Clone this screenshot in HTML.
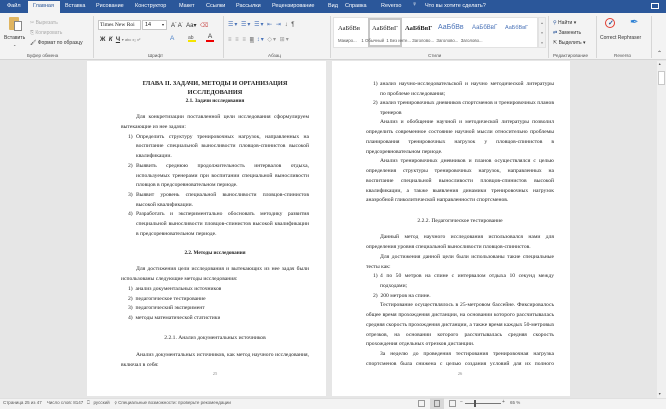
<!DOCTYPE html><html><head><meta charset="utf-8"><style>
*{margin:0;padding:0;box-sizing:border-box}
body{width:666px;height:409px;overflow:hidden;background:#e6e6e6;font-family:"Liberation Sans",sans-serif;position:relative}
.a{position:absolute;white-space:nowrap}
.tab{position:absolute;top:3px;font-size:5.5px;color:#fff}
.rb{font-size:5px;color:#333}
.g{font-size:4.6px;color:#555}
.sep{position:absolute;top:16px;width:1px;height:42px;background:#d6d6d6}
.pg{position:absolute;background:#fff}
.l{position:absolute;white-space:nowrap;font-family:"Liberation Serif",serif;font-size:5.6px;line-height:8px;color:#222;overflow:hidden}
.j{text-align:justify;text-align-last:justify}
.c{text-align:center}
.ic{position:absolute;background:#8a8a8a}
</style></head><body>
<!-- title/tab bar -->
<div class="a" style="left:0;top:0;width:666px;height:13px;background:#2b579a"></div>
<div class="a" style="left:28px;top:1px;width:32px;height:12px;background:#f3f3f3"></div>
<div class="tab" style="left:7px">Файл</div>
<div class="tab" style="left:33px;color:#2b579a">Главная</div>
<div class="tab" style="left:65px">Вставка</div>
<div class="tab" style="left:96px">Рисование</div>
<div class="tab" style="left:135px">Конструктор</div>
<div class="tab" style="left:179px">Макет</div>
<div class="tab" style="left:206px">Ссылки</div>
<div class="tab" style="left:236px">Рассылки</div>
<div class="tab" style="left:272px">Рецензирование</div>
<div class="tab" style="left:328px">Вид</div>
<div class="tab" style="left:345px">Справка</div>
<div class="tab" style="left:381px">Reverso</div>
<div class="tab" style="left:412px;top:1px;font-size:7px">♀</div>
<div class="tab" style="left:425px">Что вы хотите сделать?</div>
<div class="a" style="left:651px;top:3px;width:8px;height:6px;border:1px solid #fff"></div>
<!-- ribbon -->
<div class="a" style="left:0;top:13px;width:666px;height:47px;background:#f3f3f3;border-bottom:1px solid #d4d4d4"></div>
<div class="sep" style="left:93px"></div><div class="sep" style="left:223px"></div><div class="sep" style="left:330px"></div><div class="sep" style="left:548px"></div><div class="sep" style="left:596px"></div><div class="sep" style="left:651px"></div>
<!-- clipboard -->
<div class="a" style="left:9px;top:17px;width:10px;height:13px;background:#e0b560;border-radius:1px"></div>
<div class="a" style="left:14px;top:21px;width:8px;height:10px;background:#fff;border:1px solid #888"></div>
<div class="a rb" style="left:4px;top:35px">Вставить</div>
<div class="a rb" style="left:13px;top:42px;font-size:4px">⌄</div>
<div class="a rb" style="left:30px;top:20px;color:#aaa">✂ Вырезать</div>
<div class="a rb" style="left:30px;top:30px;color:#aaa">⎘ Копировать</div>
<div class="a rb" style="left:30px;top:40px">🖌 Формат по образцу</div>
<div class="a g" style="left:27px;top:53px">Буфер обмена</div>
<!-- font -->
<div class="a" style="left:98px;top:20px;width:43px;height:10px;background:#fff;border:1px solid #c6c6c6;font-family:'Liberation Serif',serif;font-size:5.5px;padding:1px 1px;color:#222">Times New Roi</div>
<div class="a" style="left:142px;top:20px;width:25px;height:10px;background:#fff;border:1px solid #c6c6c6;font-size:5.5px;padding:1px 2px;color:#222">14 <span style="float:right;font-size:4px">▾</span></div>
<div class="a rb" style="left:171px;top:21px;font-size:6px">A<sup style="font-size:3px">^</sup> A<sup style="font-size:3px">ˇ</sup> &nbsp;Aa▾ &nbsp;<span style="color:#c55">⌫</span></div>
<div class="a rb" style="left:100px;top:37px;font-size:6px;font-weight:bold">Ж &nbsp;<i>К</i> &nbsp;<u>Ч</u> <span style="font-weight:normal;font-size:4px;color:#777">▾ abc x₂ x²</span></div>
<div class="a" style="left:170px;top:35px;font-size:6.5px;color:#4a80c8">A</div>
<div class="a" style="left:188px;top:35px;width:8px;height:7px;border-bottom:2px solid #f5e400;font-size:5px;color:#555">ab</div>
<div class="a" style="left:206px;top:34px;width:8px;height:8px;border-bottom:2px solid #e00;font-size:6.5px;color:#333;text-align:center;line-height:6px">A</div>
<div class="a g" style="left:148px;top:53px">Шрифт</div>
<!-- paragraph -->
<div class="a rb" style="left:228px;top:21px;color:#4a73b8;font-size:6px;letter-spacing:1px">☰▾ ☰▾ ☰▾ ⇤ ⇥ <span style="color:#555">↓ ¶</span></div>
<div class="a rb" style="left:228px;top:36px;color:#999;font-size:6px;letter-spacing:1px">≡ ≡ ≡ <span style="background:#bbb;color:#666">≡</span> <span style="color:#4a73b8">↕▾</span> ◇▾ ⊞▾</div>
<div class="a g" style="left:268px;top:53px">Абзац</div>
<!-- styles -->
<div class="a" style="left:333px;top:17px;width:205px;height:31px;background:#fff;border:1px solid #e2e2e2"></div>
<div class="a" style="left:368px;top:18px;width:34px;height:29px;border:2px solid #c6c6c6"></div>
<div class="a" style="left:338px;top:25px;font-family:'Liberation Serif',serif;font-size:6.5px;color:#222">АаБбВв</div>
<div class="a" style="left:372px;top:25px;font-family:'Liberation Serif',serif;font-size:6.5px;color:#222">АаБбВвГ</div>
<div class="a" style="left:405px;top:25px;font-family:'Liberation Serif',serif;font-size:6.5px;color:#222;font-weight:bold">АаБбВвГ</div>
<div class="a" style="left:438px;top:24px;font-size:7px;color:#4a73b8">АаБбВв</div>
<div class="a" style="left:472px;top:25px;font-size:6px;color:#4a73b8">АаБбВвГ</div>
<div class="a" style="left:505px;top:25px;font-size:5.5px;color:#4a73b8">АаБбВвГ</div>
<div class="a g" style="left:338px;top:38px;font-size:4.3px">Макиро... &nbsp;&nbsp;&nbsp;1 Обычный &nbsp;1 Без инте... Заголово... &nbsp;Заголово... &nbsp;Заголово...</div>
<div class="a" style="left:538px;top:17px;width:8px;height:31px;background:#f0f0f0;border:1px solid #e2e2e2;font-size:3.5px;color:#777;text-align:center;line-height:10px">▴<br>▾<br>▾</div>
<div class="a g" style="left:428px;top:53px">Стили</div>
<!-- editing -->
<div class="a rb" style="left:553px;top:20px"><span style="color:#2b579a">⚲</span> Найти ▾</div>
<div class="a rb" style="left:553px;top:30px"><span style="color:#2b579a">⇄</span> Заменить</div>
<div class="a rb" style="left:553px;top:40px">⇱ Выделить ▾</div>
<div class="a g" style="left:553px;top:53px">Редактирование</div>
<!-- reverso -->
<div class="a" style="left:605px;top:18px;width:10px;height:10px;border:1.5px solid #e03c31;border-radius:50%"></div>
<div class="a" style="left:608px;top:19px;font-size:7px;color:#2b579a;font-weight:bold">✓</div>
<div class="a" style="left:630px;top:17px;font-size:10px;color:#2b7fd4">✒</div>
<div class="a rb" style="left:600px;top:35px">Correct Rephraser</div>
<div class="a g" style="left:614px;top:53px">Reverso</div>
<div class="a rb" style="left:657px;top:50px;font-size:6px">⌃</div>
<!-- scrollbar -->
<div class="a" style="left:657px;top:61px;width:9px;height:337px;background:#f0f0f0"></div>
<div class="a" style="left:658px;top:62px;font-size:3.5px;color:#555">▲</div>
<div class="a" style="left:658px;top:71px;width:7px;height:14px;background:#fff;border:1px solid #c8c8c8"></div>
<div class="a" style="left:658px;top:392px;font-size:3.5px;color:#555">▼</div>
<!-- pages -->
<div class="pg" style="left:87px;top:61px;width:239px;height:335px"></div>
<div class="pg" style="left:332px;top:61px;width:238px;height:335px"></div>
<!-- left page text -->
<div class="l c" style="left:121px;width:188px;top:80px;font-weight:bold;font-size:6.3px">ГЛАВА II. ЗАДАЧИ, МЕТОДЫ И ОРГАНИЗАЦИЯ</div>
<div class="l c" style="left:121px;width:188px;top:89px;font-weight:bold;font-size:6.3px">ИССЛЕДОВАНИЯ</div>
<div class="l c" style="left:121px;width:188px;top:97px;font-weight:bold;font-size:5.2px">2.1. Задачи исследования</div>
<div class="l j" style="left:136px;width:173px;top:113px">Для конкретизации поставленной цели исследования сформулируем</div>
<div class="l" style="left:121px;top:123px">вытекающие из нее задачи:</div>
<div class="l" style="left:128px;top:133px">1)</div><div class="l j" style="left:136px;width:173px;top:133px">Определить структуру тренировочных нагрузок, направленных на</div>
<div class="l j" style="left:136px;width:173px;top:142px">воспитание специальной выносливости пловцов-спинистов высокой</div>
<div class="l" style="left:136px;top:152px">квалификации.</div>
<div class="l" style="left:128px;top:162px">2)</div><div class="l j" style="left:136px;width:173px;top:162px">Выявить среднюю продолжительность интервалов отдыха,</div>
<div class="l j" style="left:136px;width:173px;top:172px">используемых тренерами при воспитании специальной выносливости</div>
<div class="l" style="left:136px;top:181px">пловцов в предсоревновательном периоде.</div>
<div class="l" style="left:128px;top:191px">3)</div><div class="l j" style="left:136px;width:173px;top:191px">Выявит уровень специальной выносливости пловцов-спинистов</div>
<div class="l" style="left:136px;top:201px">высокой квалификации.</div>
<div class="l" style="left:128px;top:210px">4)</div><div class="l j" style="left:136px;width:173px;top:210px">Разработать и экспериментально обосновать методику развития</div>
<div class="l j" style="left:136px;width:173px;top:220px">специальной выносливости пловцов-спинистов высокой квалификации</div>
<div class="l" style="left:136px;top:230px">в предсоревновательном периоде.</div>
<div class="l c" style="left:121px;width:188px;top:249px;font-weight:bold;font-size:5.2px">2.2. Методы исследования</div>
<div class="l j" style="left:136px;width:173px;top:265px">Для достижения цели исследования и вытекающих из нее задач были</div>
<div class="l" style="left:121px;top:275px">использованы следующие методы исследования:</div>
<div class="l" style="left:128px;top:285px">1)&nbsp; анализ документальных источников</div>
<div class="l" style="left:128px;top:295px">2)&nbsp; педагогическое тестирование</div>
<div class="l" style="left:128px;top:304px">3)&nbsp; педагогический эксперимент</div>
<div class="l" style="left:128px;top:314px">4)&nbsp; методы математической статистики</div>
<div class="l c" style="left:121px;width:188px;top:334px">2.2.1. Анализ документальных источников</div>
<div class="l j" style="left:136px;width:173px;top:351px">Анализ документальных источников, как метод научного исследования,</div>
<div class="l" style="left:121px;top:361px">включал в себя:</div>
<div class="l c" style="left:121px;width:188px;top:370px;font-size:4.5px;color:#888">25</div>
<!-- right page text -->
<div class="l" style="left:373px;top:80px">1)</div><div class="l j" style="left:380px;width:174px;top:80px">анализ научно-исследовательской и научно методической литературы</div>
<div class="l" style="left:380px;top:90px">по проблеме исследования;</div>
<div class="l" style="left:373px;top:99px">2)</div><div class="l j" style="left:380px;width:174px;top:99px">анализ тренировочных дневников спортсменов и тренировочных планов</div>
<div class="l" style="left:380px;top:109px">тренеров</div>
<div class="l j" style="left:380px;width:174px;top:118px">Анализ и обобщение научной и методической литературы позволил</div>
<div class="l j" style="left:366px;width:188px;top:128px">определить современное состояние научной мысли относительно проблемы</div>
<div class="l j" style="left:366px;width:188px;top:138px">планирования тренировочных нагрузок у пловцов-спинистов в</div>
<div class="l" style="left:366px;top:148px">предсоревновательном периоде.</div>
<div class="l j" style="left:380px;width:174px;top:157px">Анализ тренировочных дневников и планов осуществлялся с целью</div>
<div class="l j" style="left:366px;width:188px;top:167px">определения структуры тренировочных нагрузок, направленных на</div>
<div class="l j" style="left:366px;width:188px;top:177px">воспитание специальной выносливости пловцов-спинистов высокой</div>
<div class="l j" style="left:366px;width:188px;top:187px">квалификации, а также выявления динамики тренировочных нагрузок</div>
<div class="l" style="left:366px;top:196px">анаэробной гликолитической направленности спортсменов.</div>
<div class="l c" style="left:366px;width:188px;top:217px">2.2.2. Педагогическое тестирование</div>
<div class="l j" style="left:380px;width:174px;top:233px">Данный метод научного исследования использовался нами для</div>
<div class="l" style="left:366px;top:243px">определения уровня специальной выносливости пловцов-спинистов.</div>
<div class="l j" style="left:380px;width:174px;top:253px">Для достижения данной цели были использованы такие специальные</div>
<div class="l" style="left:366px;top:263px">тесты как:</div>
<div class="l" style="left:373px;top:272px">1)</div><div class="l j" style="left:380px;width:174px;top:272px">4 по 50 метров на спине с интервалом отдыха 10 секунд между</div>
<div class="l" style="left:380px;top:282px">подходами;</div>
<div class="l" style="left:373px;top:292px">2)&nbsp; 200 метров на спине.</div>
<div class="l j" style="left:380px;width:174px;top:301px">Тестирование осуществлялось в 25-метровом бассейне. Фиксировалось</div>
<div class="l j" style="left:366px;width:188px;top:311px">общее время прохождения дистанции, на основании которого рассчитывалась</div>
<div class="l j" style="left:366px;width:188px;top:321px">средняя скорость прохождения дистанции, а также время каждых 50-метровых</div>
<div class="l j" style="left:366px;width:188px;top:331px">отрезков, на основании которого рассчитывалась средняя скорость</div>
<div class="l" style="left:366px;top:340px">прохождения отдельных отрезков дистанции.</div>
<div class="l j" style="left:380px;width:174px;top:350px">За неделю до проведения тестирования тренировочная нагрузка</div>
<div class="l j" style="left:366px;width:188px;top:360px">спортсменов была снижена с целью создания условий для их полного</div>
<div class="l c" style="left:366px;width:188px;top:370px;font-size:4.5px;color:#888">26</div>
<!-- status bar -->
<div class="a" style="left:0;top:398px;width:666px;height:11px;background:#f3f3f3;border-top:1px solid #e0e0e0"></div>
<div class="a" style="left:3px;top:400px;font-size:4.5px;color:#555">Страница 25 из 47 &nbsp;&nbsp;&nbsp;Число слов: 8147 &nbsp;&nbsp;⎕ &nbsp;&nbsp;русский &nbsp;&nbsp;&nbsp;⚲ Специальные возможности: проверьте рекомендации</div>
<div class="a" style="left:418px;top:400px;width:7px;height:7px;border:1px solid #999"></div>
<div class="a" style="left:430px;top:398px;width:14px;height:11px;background:#d8d8d8"></div>
<div class="a" style="left:434px;top:400px;width:6px;height:7px;border:1px solid #888"></div>
<div class="a" style="left:449px;top:400px;width:7px;height:7px;border:1px solid #999"></div>
<div class="a" style="left:460px;top:399px;font-size:5px;color:#555">−</div>
<div class="a" style="left:465px;top:403px;width:36px;height:1px;background:#777"></div>
<div class="a" style="left:474px;top:400px;width:2px;height:7px;background:#555"></div>
<div class="a" style="left:502px;top:399px;font-size:5px;color:#555">+</div>
<div class="a" style="left:510px;top:400px;font-size:4.5px;color:#555">65 %</div>
</body></html>
